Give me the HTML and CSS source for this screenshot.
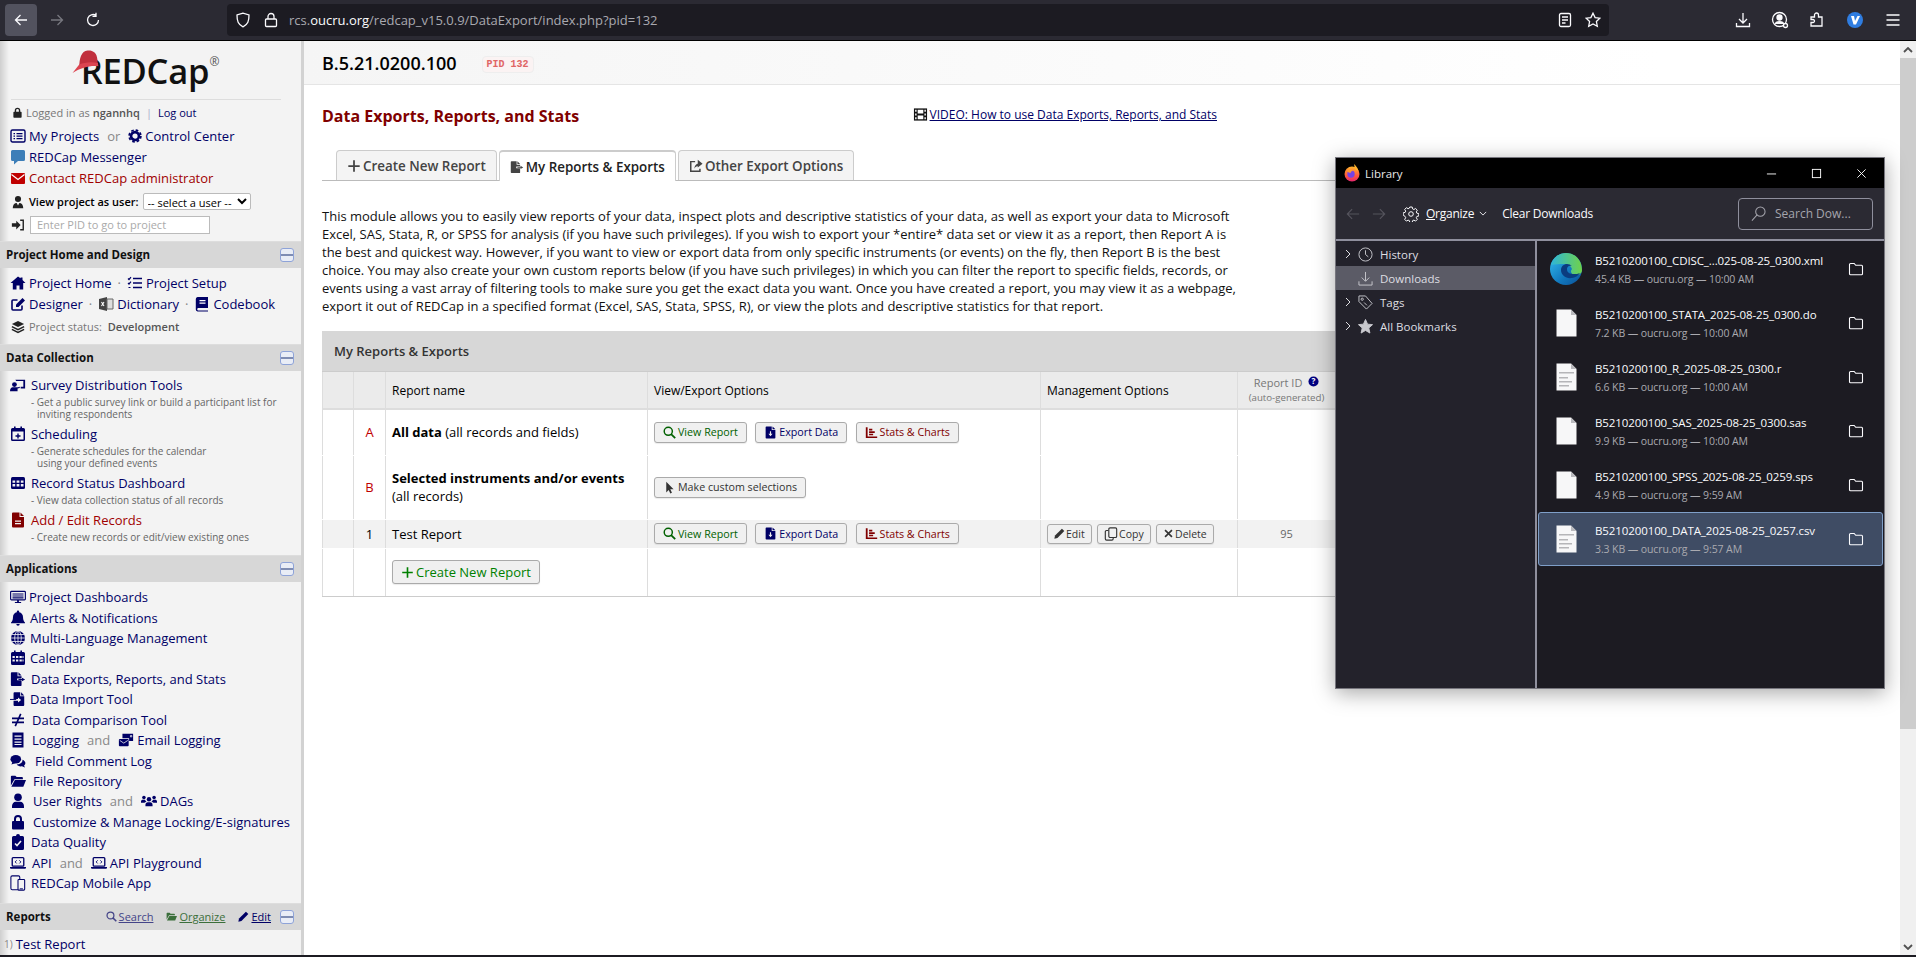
FILE: index.html
```html
<!DOCTYPE html>
<html lang="en">
<head>
    <meta charset="UTF-8">
    <title>REDCap - Data Exports, Reports, and Stats</title>
    <link rel="stylesheet" href="styles.css">
</head>
<body>
    <!-- shared icons -->
    <svg class="sprite" xmlns="http://www.w3.org/2000/svg">
        <defs>
            <linearGradient id="edge-a" x1="0" y1="0" x2="1" y2="1"><stop offset="0" stop-color="#35c1f1"/><stop offset=".6" stop-color="#1177bd"/><stop offset="1" stop-color="#0c4f95"/></linearGradient>
            <linearGradient id="edge-b" x1="0" y1="0" x2="1" y2="0"><stop offset="0" stop-color="#2fb6d8"/><stop offset="1" stop-color="#6fd24a"/></linearGradient>
            <linearGradient id="fox" x1="0" y1="0" x2="0" y2="1"><stop offset="0" stop-color="#ffb32c"/><stop offset=".6" stop-color="#ff5a3c"/><stop offset="1" stop-color="#e3246f"/></linearGradient>
        </defs>
        <symbol id="i-list" viewBox="0 0 16 16"><rect x="1" y="2" width="14" height="12" rx="1.5" fill="none" stroke="currentColor" stroke-width="1.4"/><path d="M3.5 5h1.5v1.2H3.500zM3.500 7.500h1.500v1.200H3.500zM3.500 10h1.500v1.200H3.500zM6.500 5h6v1.200h-6zM6.500 7.500h6v1.200h-6zM6.500 10h6v1.200h-6z" fill="currentColor"/></symbol>
        <symbol id="i-cog" viewBox="0 0 16 16"><circle cx="8" cy="8" r="4.500" fill="none" stroke="currentColor" stroke-width="3"/><circle cx="8" cy="8" r="6.700" fill="none" stroke="currentColor" stroke-width="2" stroke-dasharray="3 2.260"/></symbol>
        <symbol id="i-comment" viewBox="0 0 16 16"><path d="M2.500 1h11A1.500 1.500 0 0 1 15 2.500v8a1.500 1.500 0 0 1-1.500 1.500H8l-4 3.500V12H2.500A1.500 1.500 0 0 1 1 10.500v-8A1.500 1.500 0 0 1 2.500 1z" fill="currentColor"/></symbol>
        <symbol id="i-mail" viewBox="0 0 16 16"><rect x="1" y="3" width="14" height="11" rx="1" fill="currentColor"/><path d="M1.500 4.500 8 9.500l6.500-5" fill="none" stroke="#fff" stroke-width="1.200"/></symbol>
        <symbol id="i-tie" viewBox="0 0 16 16"><circle cx="8" cy="4.500" r="3.500" fill="currentColor"/><path d="M2 15c0-4 2-6 4.500-6L8 12l1.500-3C12 9 14 11 14 15z" fill="currentColor"/></symbol>
        <symbol id="i-signin" viewBox="0 0 16 16"><path d="M1 6h5V3l5 5-5 5v-3H1z" fill="currentColor"/><path d="M10.500 2.500H14v11h-3.500" fill="none" stroke="currentColor" stroke-width="1.600"/></symbol>
        <symbol id="i-home" viewBox="0 0 16 16"><path d="M8 1.500 .5 8h2.300v6.500h3.700v-4h3v4h3.700V8h2.300L12.500 5V2.500h-2v.8z" fill="currentColor"/></symbol>
        <symbol id="i-tasks" viewBox="0 0 16 16"><path d="m1 3.500 1 1 2-2.300M1 8l1 1 2-2.300M1.500 12.500h2" fill="none" stroke="currentColor" stroke-width="1.200"/><path d="M6 2.700h9v1.500H6zM6 7.300h9v1.500H6zM6 11.800h9v1.500H6z" fill="currentColor"/></symbol>
        <symbol id="i-edit" viewBox="0 0 16 16"><path d="M12 9.500V13a1 1 0 0 1-1 1H3a1 1 0 0 1-1-1V5a1 1 0 0 1 1-1h4.500" fill="none" stroke="currentColor" stroke-width="1.600"/><path d="M6 8.500 12.500 2 15 4.500 8.500 11H6z" fill="currentColor"/></symbol>
        <symbol id="i-dict" viewBox="0 0 16 16"><path d="M1 3 9 1v14l-8-2z" fill="#444"/><path d="M9 3h6v10H9z" fill="#ddd" stroke="#666"/><path d="m3.500 6 2.500 4M6 6l-2.500 4" stroke="#fff" stroke-width="1.100"/></symbol>
        <symbol id="i-book" viewBox="0 0 16 16"><path d="M3.500 1H14v11H4a1.300 1.300 0 0 0 0 2.400h10V15.500H3.500A2 2 0 0 1 1.800 13.500V3A2 2 0 0 1 3.500 1z" fill="currentColor"/><path d="M5.500 4h6v1.200h-6zM5.500 6.500h6v1.200h-6z" fill="#fff"/></symbol>
        <symbol id="i-layers" viewBox="0 0 16 16"><path d="m8 1 7 3.500L8 8 1 4.500z" fill="currentColor"/><path d="m1 7.500 7 3.500 7-3.500M1 10.800l7 3.500 7-3.500" fill="none" stroke="currentColor" stroke-width="1.700"/></symbol>
        <symbol id="i-teacher" viewBox="0 0 18 16"><path d="M6 2h11v10h-5v-2h3V3.500H7z" fill="currentColor"/><circle cx="5" cy="7.500" r="2.700" fill="currentColor"/><path d="M0 15c0-3 1.500-4.500 3-4.500h6l2-.500v1.500L8.500 12v3z" fill="currentColor"/></symbol>
        <symbol id="i-calplus" viewBox="0 0 16 16"><path d="M4 .5h1.600V2h4.800V.5H12V2h1.500A1.500 1.500 0 0 1 15 3.500v10a1.500 1.500 0 0 1-1.500 1.500h-11A1.500 1.500 0 0 1 1 13.500v-10A1.500 1.500 0 0 1 2.500 2H4z" fill="currentColor"/><rect x="2.500" y="5.500" width="11" height="8" fill="#f3f3f3"/><path d="M7.300 7.500h1.400v1.800h1.800v1.400H8.700v1.800H7.300v-1.800H5.500V9.300h1.800z" fill="currentColor"/></symbol>
        <symbol id="i-table" viewBox="0 0 16 16"><rect x="1" y="2" width="14" height="12" rx="1.500" fill="currentColor"/><path d="M2.500 5.500h2.700v2.200H2.500zM6.600 5.500h2.800v2.200H6.600zM10.800 5.500h2.700v2.200h-2.700zM2.500 9h2.700v2.500H2.500zM6.600 9h2.800v2.500H6.600zM10.800 9h2.700v2.500h-2.700z" fill="#f3f3f3"/></symbol>
        <symbol id="i-file" viewBox="0 0 16 16"><path d="M3 .5h6.500V5H14v9.500a1 1 0 0 1-1 1H3a1 1 0 0 1-1-1v-13a1 1 0 0 1 1-1zM10.500.5 14 4h-3.500z" fill="currentColor"/><path d="M5 8.500h6v1.200H5zM5 11h6v1.200H5z" fill="#f3f3f3"/></symbol>
        <symbol id="i-monitor" viewBox="0 0 18 16"><rect x=".7" y="1.700" width="16.600" height="9.600" rx="1" fill="none" stroke="currentColor" stroke-width="1.300"/><path d="M2.800 4h12.400v1.300H2.800zM2.800 6.200h12.400v1.300H2.800zM2.800 8.400h12.400v1.300H2.800z" fill="currentColor"/><path d="M8 11.500h2v2h2.500v1.300h-7v-1.300H8z" fill="currentColor"/></symbol>
        <symbol id="i-bell" viewBox="0 0 16 16"><path d="M8 .5a1.200 1.200 0 0 1 1.200 1.200v.6C11.500 2.800 13 4.700 13 7c0 3.200 1 4.500 2 5.500v.8H1v-.8c1-1 2-2.300 2-5.500 0-2.300 1.500-4.200 3.800-4.700v-.6A1.200 1.200 0 0 1 8 .5zM6.300 14h3.400a1.700 1.700 0 0 1-3.400 0z" fill="currentColor"/></symbol>
        <symbol id="i-globe" viewBox="0 0 16 16"><circle cx="8" cy="8" r="7" fill="currentColor"/><path d="M8 1v14M1 8h14M2 4.500h12M2 11.500h12" stroke="#f3f3f3" stroke-width=".8"/><ellipse cx="8" cy="8" rx="3.300" ry="7" fill="none" stroke="#f3f3f3" stroke-width=".8"/></symbol>
        <symbol id="i-cal" viewBox="0 0 16 16"><path d="M4 .5h1.600V2h4.800V.5H12V2h1.500A1.500 1.500 0 0 1 15 3.500v10a1.500 1.500 0 0 1-1.500 1.500h-11A1.500 1.500 0 0 1 1 13.500v-10A1.500 1.500 0 0 1 2.500 2H4z" fill="currentColor"/><path d="M2.500 6h2.300v2H2.500zM6 6h2.300v2H6zM9.500 6h2.300v2H9.500zM12.500 6h1v2h-1zM2.500 9.500h2.300v2H2.500zM6 9.500h2.300v2H6zM9.500 9.500h2.300v2H9.500zM12.500 9.500h1v2h-1z" fill="#f3f3f3"/></symbol>
        <symbol id="i-export" viewBox="0 0 18 16"><path d="M2 .5h6.500V5H13v2.500H8v2h5V15a.8.800 0 0 1-.8.800H2a1 1 0 0 1-1-1V1.500a1 1 0 0 1 1-1zM9.500.5 13 4H9.500z" fill="currentColor"/><path d="M13.500 6.500 17 8.500l-3.500 2V9H9.500V8h4z" fill="currentColor"/></symbol>
        <symbol id="i-import" viewBox="0 0 18 16"><path d="M5 .5h6.500V5H16v9.800a1 1 0 0 1-1 1H5a1 1 0 0 1-1-1V10h5v1.800L12.500 9 9 6.200V8H4V1.500a1 1 0 0 1 1-1zM12.500.5 16 4h-3.500z" fill="currentColor"/><path d="M0 8.500h7" stroke="currentColor" stroke-width="1.100"/></symbol>
        <symbol id="i-neq" viewBox="0 0 16 16"><path d="M2 5.500h12v1.700H2zM2 9.500h12v1.700H2zM10 1.500l1.500.8L6 14.500l-1.500-.8z" fill="currentColor"/></symbol>
        <symbol id="i-receipt" viewBox="0 0 16 16"><path d="M2.500 .5h11v15h-11z" fill="currentColor"/><path d="M4.500 3.500h7v1.300h-7zM4.500 6.500h7v1.300h-7zM4.500 9.500h7v1.300h-7zM4.500 12h7v1h-7z" fill="#f3f3f3"/></symbol>
        <symbol id="i-mailbulk" viewBox="0 0 18 16"><path d="M5 1h12v8h-4.500V6H5z" fill="currentColor"/><rect x="1" y="7" width="11" height="8" rx="1" fill="currentColor"/><path d="m2 8.500 4.500 3 4.500-3M14 3h1.500v1.500H14z" fill="none" stroke="#f3f3f3" stroke-width=".9"/></symbol>
        <symbol id="i-comments" viewBox="0 0 18 16"><ellipse cx="6.500" cy="6" rx="6" ry="4.700" fill="currentColor"/><path d="m3 9-1.500 3L6 10.500z" fill="currentColor"/><path d="M14 6.500c2 .7 3.300 2.200 3.300 3.800 0 1.200-.6 2.200-1.500 2.900l1 2-3.300-1.200c-2.500.4-5-.4-6-2 4-.1 7-2.500 6.500-5.500z" fill="currentColor"/></symbol>
        <symbol id="i-folderopen" viewBox="0 0 18 16"><path d="M1 3a1 1 0 0 1 1-1h4l1.500 1.500h6a1 1 0 0 1 1 1V6H5L1 13z" fill="currentColor"/><path d="M5.500 7H18l-3 7.500H1.500z" fill="currentColor"/></symbol>
        <symbol id="i-user" viewBox="0 0 16 16"><circle cx="8" cy="4.300" r="3.800" fill="currentColor"/><path d="M2 15v-1.800c0-2.500 1.700-4.400 3.800-4.400h4.400c2.100 0 3.800 1.900 3.800 4.400V15z" fill="currentColor"/></symbol>
        <symbol id="i-users" viewBox="0 0 18 16"><circle cx="9" cy="6" r="2.500" fill="currentColor"/><path d="M5 14v-1.500c0-2 1.200-3 2.500-3h3c1.300 0 2.500 1 2.500 3V14z" fill="currentColor"/><circle cx="3.300" cy="4" r="2" fill="currentColor"/><circle cx="14.700" cy="4" r="2" fill="currentColor"/><path d="M0 10V8.500C0 7.200 1 6.500 2 6.500h2.500C5 8 6 8.500 6.300 8.800 5 9.200 4.400 9.700 4 10zM18 10V8.500c0-1.300-1-2-2-2h-2.500C13 8 12 8.500 11.700 8.800c1.300.4 1.900.9 2.300 1.200z" fill="currentColor"/></symbol>
        <symbol id="i-lock" viewBox="0 0 16 16"><path d="M4 7V5a4 4 0 0 1 8 0v2h1a1 1 0 0 1 1 1v6.500a1 1 0 0 1-1 1H3a1 1 0 0 1-1-1V8a1 1 0 0 1 1-1zm2 0h4V5a2 2 0 0 0-4 0z" fill="currentColor"/></symbol>
        <symbol id="i-clip" viewBox="0 0 16 16"><path d="M6 2a2 2 0 0 1 4 0h2.500A1.500 1.500 0 0 1 14 3.500v11a1.500 1.500 0 0 1-1.500 1.500h-9A1.500 1.500 0 0 1 2 14.500v-11A1.500 1.500 0 0 1 3.500 2z" fill="currentColor"/><path d="m5 9.500 2 2 4-4.500" fill="none" stroke="#f3f3f3" stroke-width="1.600"/></symbol>
        <symbol id="i-laptop" viewBox="0 0 18 16"><rect x="2.500" y="2" width="13" height="9.500" rx="1" fill="none" stroke="currentColor" stroke-width="1.500"/><path d="M0 12.500h18v.8a1.200 1.200 0 0 1-1.200 1.200H1.200A1.200 1.200 0 0 1 0 13.300z" fill="currentColor"/><path d="M7.500 5 5.800 6.800l1.700 1.700M10.500 5l1.700 1.800-1.700 1.700" fill="none" stroke="currentColor" stroke-width="1"/></symbol>
        <symbol id="i-mobile" viewBox="0 0 18 18"><rect x="1" y="1" width="10" height="15.500" rx="1.500" fill="none" stroke="currentColor" stroke-width="1.200"/><rect x="9" y="5" width="7.500" height="12" rx="1" fill="#f3f3f3" stroke="currentColor" stroke-width="1.200"/><path d="M11 15.500h3.500" stroke="currentColor"/></symbol>
        <symbol id="i-search" viewBox="0 0 16 16"><circle cx="6.500" cy="6.500" r="5" fill="none" stroke="currentColor" stroke-width="1.800"/><path d="m10 10 5 5" stroke="currentColor" stroke-width="2.200"/></symbol>
        <symbol id="i-pencil" viewBox="0 0 16 16"><path d="M11.500 1 15 4.500 5 14.500l-4.500 1 1-4.500z" fill="currentColor"/></symbol>
        <symbol id="i-plus" viewBox="0 0 16 16"><path d="M7 1.500h2V7h5.500v2H9v5.500H7V9H1.500V7H7z" fill="currentColor"/></symbol>
        <symbol id="i-share" viewBox="0 0 16 16"><path d="M11 5V8l-.2.100c-2.500.3-4.300 1.500-4.800 3.400 0-3.500 2-6.200 5-6.500zM10 .8l5.500 4.500-5.500 4.500z" fill="currentColor"/><path d="M12.500 11v3H2V3h5" fill="none" stroke="currentColor" stroke-width="1.700"/></symbol>
        <symbol id="i-film" viewBox="0 0 16 16"><rect x="1" y="1.500" width="14" height="13" fill="currentColor"/><path d="M2.300 3h1.500v2H2.300zM2.300 7h1.500v2H2.300zM2.300 11h1.500v2H2.300zM12.200 3h1.500v2h-1.500zM12.200 7h1.500v2h-1.500zM12.200 11h1.500v2h-1.500zM5 3h6v4H5zM5 9h6v4H5z" fill="#fff"/></symbol>
        <symbol id="i-filesm" viewBox="0 0 16 16"><path d="M3 .5h6.500V5H14v9.500a1 1 0 0 1-1 1H3a1 1 0 0 1-1-1v-13a1 1 0 0 1 1-1zM10.500.5 14 4h-3.500z" fill="currentColor"/><path d="M7.300 6.500h1.400v3h1.800L8 12.500 5.500 9.500h1.800z" fill="#f0f0f0"/></symbol>
        <symbol id="i-chart" viewBox="0 0 16 16"><path d="M1 1.500h2.200v11.300H15v1.900H1z" fill="currentColor"/><path d="M5 3.500h4v2H5zM5 6.500h7v2H5zM5 9.500h5v2H5z" fill="currentColor"/></symbol>
        <symbol id="i-cursor" viewBox="0 0 16 16"><path d="M4 1v13l3-3 2 4.500 2-1L9 10h4z" fill="currentColor"/></symbol>
        <symbol id="i-copy" viewBox="0 0 16 16"><rect x="5.500" y="1" width="9" height="11" rx="1.500" fill="none" stroke="currentColor" stroke-width="1.300"/><path d="M5 4H3a1.500 1.500 0 0 0-1.500 1.500v8A1.500 1.500 0 0 0 3 15h6a1.500 1.500 0 0 0 1.500-1.500V12.500" fill="none" stroke="currentColor" stroke-width="1.300"/></symbol>
        <symbol id="i-times" viewBox="0 0 16 16"><path d="m3 3 10 10M13 3 3 13" stroke="currentColor" stroke-width="2.400"/></symbol>
        <symbol id="i-folder" viewBox="0 0 16 16"><path d="M1.500 3.500a1 1 0 0 1 1-1h3.700l1.500 1.800h5.800a1 1 0 0 1 1 1v7.400a1 1 0 0 1-1 1H2.500a1 1 0 0 1-1-1z" fill="none" stroke="currentColor" stroke-width="1.100"/></symbol>
        <symbol id="i-doc" viewBox="0 0 21 28"><path d="M.5.500h14.500l5.500 5.500v21.500H.5z" fill="#f7f7f8"/><path d="M15 .5v5.500h5.500z" fill="#b9b9bd"/></symbol>
        <symbol id="i-doclines" viewBox="0 0 21 28"><path d="M.5.500h14.500l5.500 5.500v21.500H.5z" fill="#f7f7f8"/><path d="M15 .5v5.500h5.500z" fill="#b9b9bd"/><path d="M3 9h15v1.500H3zM3 14h9v1.500H3zM3 18h13v1.500H3zM3 22h10v1.500H3z" fill="#b5b5b8"/></symbol>
    </svg>

    <div class="browser-bar">
        <span class="nav-btn is-active"><svg class="tb-ic" viewBox="0 0 16 16"><path d="M14 8H2.500M7.500 3l-5 5 5 5"/></svg></span>
        <span class="nav-btn is-dim"><svg class="tb-ic" viewBox="0 0 16 16"><path d="M2 8h11.500M8.500 3l5 5-5 5"/></svg></span>
        <span class="nav-btn"><svg class="tb-ic" viewBox="0 0 16 16"><path d="M13.500 8A5.500 5.500 0 1 1 11 3.400M11 .8v3.500h-3.500"/></svg></span>
        <div class="url-bar">
            <svg class="tb-ic" viewBox="0 0 16 16"><path d="M8 1.200 2 3c0 6 1 9.500 6 11.800C13 12.500 14 9 14 3z"/></svg>
            <svg class="tb-ic url-lock" viewBox="0 0 16 16"><rect x="2.500" y="7" width="11" height="7.500" rx="1"/><path d="M5 7V4.500a3 3 0 0 1 6 0V7"/></svg>
            <span class="url-text">rcs.<b>oucru.org</b>/redcap_v15.0.9/DataExport/index.php?pid=132</span>
            <svg class="tb-ic url-reader" viewBox="0 0 16 16"><rect x="2.500" y="1.500" width="11" height="13" rx="1.500"/><path d="M5 5h6M5 8h6M5 11h3.500"/></svg>
            <svg class="tb-ic url-star" viewBox="0 0 16 16"><path d="m8 1.200 2.100 4.400 4.700.6-3.400 3.300.9 4.700L8 11.900l-4.300 2.300.9-4.700L1.200 6.200l4.700-.6z"/></svg>
        </div>
        <svg class="tb-ic bar-download" viewBox="0 0 16 16"><path d="M8 1v9.500M4 7l4 4 4-4M1.500 11v3.500h13V11"/></svg>
        <svg class="tb-ic bar-account" viewBox="0 0 18 18"><circle cx="8.500" cy="8.500" r="7"/><circle cx="8.500" cy="6.500" r="2.500" fill="#fbfbfe"/><path d="M4.500 13c0-3 8-3 8 0" fill="#fbfbfe"/><circle cx="14.500" cy="14.500" r="2" fill="#2b2a33"/></svg>
        <svg class="tb-ic bar-ext" viewBox="0 0 16 16"><path d="M2 5h3.500V3a2 2 0 0 1 4 0v2H13v9H2v-3.500h2a1.500 1.500 0 0 0 0-3H2z"/></svg>
        <svg class="bar-vpn" viewBox="0 0 16 16"><path d="M8 0a8 8 0 0 1 8 8 8 8 0 0 1-16 0 8 8 0 0 1 8-8z" fill="#2f7de1"/><path d="M4 4h3l1 5 2.500-5H13l-4 8.500H6.500z" fill="#fff"/></svg>
        <svg class="tb-ic bar-menu" viewBox="0 0 16 16"><path d="M1.500 3h13M1.500 8h13M1.500 13h13"/></svg>
    </div>

    <div class="app">
        <nav class="sidebar">
            <div class="logo-box">
                <div class="logo">
                    <svg class="logo-hat" viewBox="0 0 28 23"><path d="M7 17C7 8 9 1 15 .5c5-.4 9 2 9.500 8.500l.5 5c-6-1-12-.5-18 3z" fill="#c1303d"/><path d="M7 14 .5 22c4-2.500 7-4 11-5 5-1.500 9-2 14-1.500l-.5-3C18 11 12 12 7 14z" fill="#dc4450"/></svg>
                    <span class="logo-text">REDCap</span><sup class="logo-reg">®</sup>
                </div>
            </div>
            <div class="user-row">
                <svg class="ic ic-sm"><use href="#i-lock"/></svg>
                <span>Logged in as <b>ngannhq</b></span><span class="sep">|</span><a class="side-link">Log out</a>
            </div>
            <div class="side-row top-row"><svg class="ic"><use href="#i-list"/></svg><a class="side-link">My Projects</a><span class="or">or</span><svg class="ic ic-cog"><use href="#i-cog"/></svg><a class="side-link">Control Center</a></div>
            <div class="side-row"><svg class="ic ic-blue"><use href="#i-comment"/></svg><a class="side-link">REDCap Messenger</a></div>
            <div class="side-row"><svg class="ic ic-red"><use href="#i-mail"/></svg><a class="side-link link-red">Contact REDCap administrator</a></div>
            <div class="view-row">
                <svg class="ic ic-sm2"><use href="#i-tie"/></svg>
                <b>View project as user:</b>
                <select class="user-select"><option>-- select a user --</option></select>
            </div>
            <div class="pid-row">
                <svg class="ic ic-sm2"><use href="#i-signin"/></svg>
                <input class="pid-input" placeholder="Enter PID to go to project">
            </div>

            <div class="section-head">Project Home and Design<span class="collapse"></span></div>
            <div class="section-body home-body">
                <div class="side-row"><svg class="ic"><use href="#i-home"/></svg><a class="side-link">Project Home</a><span class="dot">·</span><svg class="ic"><use href="#i-tasks"/></svg><a class="side-link">Project Setup</a></div>
                <div class="side-row"><svg class="ic"><use href="#i-edit"/></svg><a class="side-link">Designer</a><span class="dot">·</span><svg class="ic"><use href="#i-dict"/></svg><a class="side-link">Dictionary</a><span class="dot">·</span><svg class="ic"><use href="#i-book"/></svg><a class="side-link">Codebook</a></div>
                <div class="status-row"><svg class="ic ic-sm2"><use href="#i-layers"/></svg><span>Project status:</span><b>Development</b></div>
            </div>

            <div class="section-head">Data Collection<span class="collapse"></span></div>
            <div class="section-body collect-body">
                <div class="side-item">
                    <div class="side-row"><svg class="ic pad-2"><use href="#i-teacher"/></svg><a class="side-link">Survey Distribution Tools</a></div>
                    <p class="side-desc">- Get a public survey link or build a participant list for<br><span class="indent">inviting respondents</span></p>
                </div>
                <div class="side-item">
                    <div class="side-row"><svg class="ic pad-2"><use href="#i-calplus"/></svg><a class="side-link">Scheduling</a></div>
                    <p class="side-desc">- Generate schedules for the calendar<br><span class="indent">using your defined events</span></p>
                </div>
                <div class="side-item">
                    <div class="side-row"><svg class="ic pad-2"><use href="#i-table"/></svg><a class="side-link">Record Status Dashboard</a></div>
                    <p class="side-desc">- View data collection status of all records</p>
                </div>
                <div class="side-item">
                    <div class="side-row"><svg class="ic ic-maroon pad-2"><use href="#i-file"/></svg><a class="side-link link-red">Add / Edit Records</a></div>
                    <p class="side-desc">- Create new records or edit/view existing ones</p>
                </div>
            </div>

            <div class="section-head">Applications<span class="collapse"></span></div>
            <div class="section-body apps-body">
                <div class="side-row"><svg class="ic"><use href="#i-monitor"/></svg><a class="side-link">Project Dashboards</a></div>
                <div class="side-row"><svg class="ic pad-1"><use href="#i-bell"/></svg><a class="side-link">Alerts &amp; Notifications</a></div>
                <div class="side-row"><svg class="ic pad-1"><use href="#i-globe"/></svg><a class="side-link">Multi-Language Management</a></div>
                <div class="side-row"><svg class="ic pad-1"><use href="#i-cal"/></svg><a class="side-link">Calendar</a></div>
                <div class="side-row"><svg class="ic pad-2"><use href="#i-export"/></svg><a class="side-link">Data Exports, Reports, and Stats</a></div>
                <div class="side-row"><svg class="ic pad-1"><use href="#i-import"/></svg><a class="side-link">Data Import Tool</a></div>
                <div class="side-row"><svg class="ic pad-3"><use href="#i-neq"/></svg><a class="side-link">Data Comparison Tool</a></div>
                <div class="side-row"><svg class="ic pad-3"><use href="#i-receipt"/></svg><a class="side-link">Logging</a><span class="or">and</span><svg class="ic"><use href="#i-mailbulk"/></svg><a class="side-link">Email Logging</a></div>
                <div class="side-row"><svg class="ic pad-6"><use href="#i-comments"/></svg><a class="side-link">Field Comment Log</a></div>
                <div class="side-row"><svg class="ic pad-4"><use href="#i-folderopen"/></svg><a class="side-link">File Repository</a></div>
                <div class="side-row"><svg class="ic pad-4"><use href="#i-user"/></svg><a class="side-link">User Rights</a><span class="or">and</span><svg class="ic"><use href="#i-users"/></svg><a class="side-link">DAGs</a></div>
                <div class="side-row"><svg class="ic pad-4"><use href="#i-lock"/></svg><a class="side-link">Customize &amp; Manage Locking/E-signatures</a></div>
                <div class="side-row"><svg class="ic pad-2"><use href="#i-clip"/></svg><a class="side-link">Data Quality</a></div>
                <div class="side-row"><svg class="ic pad-3"><use href="#i-laptop"/></svg><a class="side-link">API</a><span class="or">and</span><svg class="ic"><use href="#i-laptop"/></svg><a class="side-link">API Playground</a></div>
                <div class="side-row"><svg class="ic pad-2"><use href="#i-mobile"/></svg><a class="side-link">REDCap Mobile App</a></div>
            </div>

            <div class="section-head">
                Reports
                <span class="head-tools">
                    <span class="tool tool-gray"><svg class="ic-tool"><use href="#i-search"/></svg><u>Search</u></span>
                    <span class="tool tool-green"><svg class="ic-tool"><use href="#i-folderopen"/></svg><u>Organize</u></span>
                    <span class="tool tool-blue"><svg class="ic-tool"><use href="#i-pencil"/></svg><u>Edit</u></span>
                </span>
                <span class="collapse"></span>
            </div>
            <div class="report-row"><span class="report-num">1)</span><a class="side-link">Test Report</a></div>
        </nav>

        <main class="main">
            <div class="project-bar">
                <span class="project-name">B.5.21.0200.100</span>
                <code class="pid-badge">PID 132</code>
            </div>
            <div class="content">
                <div class="title-row">
                    <h1 class="page-title">Data Exports, Reports, and Stats</h1>
                    <a class="video-link"><svg class="ic ic-film"><use href="#i-film"/></svg><u>VIDEO: How to use Data Exports, Reports, and Stats</u></a>
                </div>
                <div class="tabs">
                    <a class="tab"><svg class="ic-tab"><use href="#i-plus"/></svg>Create New Report</a>
                    <a class="tab tab-active"><svg class="ic-tab"><use href="#i-export"/></svg>My Reports &amp; Exports</a>
                    <a class="tab"><svg class="ic-tab"><use href="#i-share"/></svg>Other Export Options</a>
                </div>
                <p class="intro">This module allows you to easily view reports of your data, inspect plots and descriptive statistics of your data, as well as export your data to Microsoft Excel, SAS, Stata, R, or SPSS for analysis (if you have such privileges). If you wish to export your *entire* data set or view it as a report, then Report A is the best and quickest way. However, if you want to view or export data from only specific instruments (or events) on the fly, then Report B is the best choice. You may also create your own custom reports below (if you have such privileges) in which you can filter the report to specific fields, records, or events using a vast array of filtering tools to make sure you get the exact data you want. Once you have created a report, you may view it as a webpage, export it out of REDCap in a specified format (Excel, SAS, Stata, SPSS, R), or view the plots and descriptive statistics for that report.</p>

                <div class="reports">
                    <div class="reports-title">My Reports &amp; Exports</div>
                    <table class="reports-table">
                        <colgroup><col class="c-drag"><col class="c-id"><col class="c-name"><col class="c-view"><col class="c-manage"><col class="c-rid"></colgroup>
                        <thead>
                            <tr>
                                <th></th><th></th><th>Report name</th><th>View/Export Options</th><th>Management Options</th>
                                <th class="rid-head">Report ID <svg class="help-ic" viewBox="0 0 12 12"><circle cx="6" cy="6" r="5.500" fill="#000080"/><text x="6" y="9" text-anchor="middle" class="help-q">?</text></svg><br><span class="rid-sub">(auto-generated)</span></th>
                            </tr>
                        </thead>
                        <tbody>
                            <tr class="row-a">
                                <td></td><td class="letter">A</td>
                                <td class="name"><b>All data</b> (all records and fields)</td>
                                <td class="view">
                                    <span class="btn btn-green"><svg class="ic-btn"><use href="#i-search"/></svg>View Report</span>
                                    <span class="btn btn-navy"><svg class="ic-btn"><use href="#i-filesm"/></svg>Export Data</span>
                                    <span class="btn btn-maroon"><svg class="ic-btn"><use href="#i-chart"/></svg>Stats &amp; Charts</span>
                                </td>
                                <td></td><td></td>
                            </tr>
                            <tr class="row-b">
                                <td></td><td class="letter">B</td>
                                <td class="name"><b>Selected instruments and/or events</b><br>(all records)</td>
                                <td class="view"><span class="btn btn-dark"><svg class="ic-btn"><use href="#i-cursor"/></svg>Make custom selections</span></td>
                                <td></td><td></td>
                            </tr>
                            <tr class="row-test">
                                <td></td><td class="num">1</td>
                                <td class="name">Test Report</td>
                                <td class="view">
                                    <span class="btn btn-green"><svg class="ic-btn"><use href="#i-search"/></svg>View Report</span>
                                    <span class="btn btn-navy"><svg class="ic-btn"><use href="#i-filesm"/></svg>Export Data</span>
                                    <span class="btn btn-maroon"><svg class="ic-btn"><use href="#i-chart"/></svg>Stats &amp; Charts</span>
                                </td>
                                <td class="view">
                                    <span class="btn btn-dark btn-sm"><svg class="ic-btn"><use href="#i-pencil"/></svg>Edit</span>
                                    <span class="btn btn-dark btn-sm btn-copy"><svg class="ic-btn"><use href="#i-copy"/></svg>Copy</span>
                                    <span class="btn btn-dark btn-sm"><svg class="ic-btn"><use href="#i-times"/></svg>Delete</span>
                                </td>
                                <td class="rid">95</td>
                            </tr>
                            <tr class="row-new">
                                <td></td><td></td>
                                <td class="name"><span class="btn btn-create"><svg class="ic-btn"><use href="#i-plus"/></svg>Create New Report</span></td>
                                <td></td><td></td><td></td>
                            </tr>
                        </tbody>
                    </table>
                </div>
            </div>
        </main>

        <div class="scrollbar">
            <span class="sb-btn"><svg viewBox="0 0 10 6"><path d="M1 5l4-4 4 4" fill="none" stroke="#505050" stroke-width="1.800"/></svg></span>
            <div class="sb-thumb"></div>
            <div class="sb-track"></div>
            <span class="sb-btn"><svg viewBox="0 0 10 6"><path d="M1 1l4 4 4-4" fill="none" stroke="#505050" stroke-width="1.800"/></svg></span>
        </div>
    </div>
    <div class="page-end"></div>

    <!-- floating Library window -->
    <section class="library">
        <header class="lib-title">
            <svg class="lib-logo" viewBox="0 0 16 18"><circle cx="8" cy="10" r="7.500" fill="url(#fox)"/><path d="M10 0c2 2 4 4 4.500 7L11 5z" fill="#ffb32c"/><circle cx="7" cy="10" r="3.700" fill="#7542e5"/><path d="M3 6c2-1 5-1 6 1-2 0-3 1-2 2-2 0-4-1-4-3z" fill="#ff9a2c"/></svg>
            <span class="lib-name">Library</span>
            <span class="win-btns">
                <svg viewBox="0 0 12 12"><path d="M1 6.500h10"/></svg>
                <svg viewBox="0 0 12 12"><rect x="1.500" y="1.500" width="9" height="9"/></svg>
                <svg viewBox="0 0 12 12"><path d="m1.500 1.500 9 9M10.500 1.500l-9 9"/></svg>
            </span>
        </header>
        <div class="lib-toolbar">
            <svg class="lib-arrow" viewBox="0 0 16 16"><path d="M15 8H1.500M7 2.500 1.500 8 7 13.500"/></svg>
            <svg class="lib-arrow" viewBox="0 0 16 16"><path d="M1 8h13.500M9 2.500 14.500 8 9 13.500"/></svg>
            <svg class="lib-gear" viewBox="0 0 16 16"><path d="M6.800 1h2.400l.4 1.900 1.300.6 1.700-1 1.700 1.700-1 1.700.6 1.300 1.900.4v2.400l-1.900.4-.6 1.300 1 1.700-1.700 1.700-1.700-1-1.300.6-.4 1.900H6.800l-.4-1.900-1.300-.6-1.700 1-1.700-1.700 1-1.700-.6-1.300L.2 9.200V6.800l1.900-.4.600-1.300-1-1.700 1.700-1.700 1.700 1 1.300-.6z"/><circle cx="8" cy="8" r="2.300"/></svg>
            <span class="lib-action"><u>O</u>rganize</span>
            <svg class="lib-chev" viewBox="0 0 10 6"><path d="m1 1 4 4 4-4"/></svg>
            <span class="lib-action lib-clear">Clear Downloads</span>
            <div class="lib-search">
                <svg viewBox="0 0 16 16"><circle cx="10" cy="6" r="5"/><path d="m6.500 9.500-5.500 6"/></svg>
                <span>Search Dow...</span>
            </div>
        </div>
        <div class="lib-body">
            <ul class="lib-tree">
                <li><svg class="tree-chev" viewBox="0 0 6 10"><path d="m1 1 4 4-4 4"/></svg><svg class="tree-ic" viewBox="0 0 16 16"><circle cx="8" cy="8" r="7"/><path d="M8 3.500V8l3 2.500"/></svg>History</li>
                <li class="is-selected"><span class="tree-gap"></span><svg class="tree-ic" viewBox="0 0 16 16"><path d="M8 1v9.500M4 7l4 4 4-4M1 11v4h14v-4"/></svg>Downloads</li>
                <li><svg class="tree-chev" viewBox="0 0 6 10"><path d="m1 1 4 4-4 4"/></svg><svg class="tree-ic" viewBox="0 0 16 16"><path d="M1 1h7l7 8-6 6-8-8z"/><circle cx="4.500" cy="4.500" r="1.200"/><path d="m6.500 8 3 3"/></svg>Tags</li>
                <li><svg class="tree-chev" viewBox="0 0 6 10"><path d="m1 1 4 4-4 4"/></svg><svg class="tree-ic tree-star" viewBox="0 0 16 16"><path d="m8 .5 2.200 5 5.300.5-4 3.600 1.200 5.400L8 12.200 3.300 15l1.200-5.400-4-3.600 5.300-.5z"/></svg>All Bookmarks</li>
            </ul>
            <ul class="lib-files">
                <li class="file">
                    <svg class="edge-ic" viewBox="0 0 32 32"><circle cx="16" cy="16" r="16" fill="url(#edge-a)"/><path d="M1 12C3 4 10 0 16 0c9 0 16 7 16 17 0 4-4 6-8 5-3-1-4-4-2-6-1-3-4-5-8-5-5 0-9 0-13 1z" fill="url(#edge-b)"/><path d="M24 21c-4 0-7-1-7-5 0-3 3-4 5-3-4-4-11-2-11 4 0 5 5 9 11 8 3-.5 6-2 8-5-2 1-4 1-6 1z" fill="#0b3c7f"/></svg>
                    <div class="file-text"><div class="file-name">B5210200100_CDISC_...025-08-25_0300.xml</div><div class="file-meta">45.4 KB — oucru.org — 10:00 AM</div></div>
                    <svg class="folder-ic"><use href="#i-folder"/></svg>
                </li>
                <li class="file">
                    <svg class="doc-ic"><use href="#i-doc"/></svg>
                    <div class="file-text"><div class="file-name">B5210200100_STATA_2025-08-25_0300.do</div><div class="file-meta">7.2 KB — oucru.org — 10:00 AM</div></div>
                    <svg class="folder-ic"><use href="#i-folder"/></svg>
                </li>
                <li class="file">
                    <svg class="doc-ic"><use href="#i-doclines"/></svg>
                    <div class="file-text"><div class="file-name">B5210200100_R_2025-08-25_0300.r</div><div class="file-meta">6.6 KB — oucru.org — 10:00 AM</div></div>
                    <svg class="folder-ic"><use href="#i-folder"/></svg>
                </li>
                <li class="file">
                    <svg class="doc-ic"><use href="#i-doc"/></svg>
                    <div class="file-text"><div class="file-name">B5210200100_SAS_2025-08-25_0300.sas</div><div class="file-meta">9.9 KB — oucru.org — 10:00 AM</div></div>
                    <svg class="folder-ic"><use href="#i-folder"/></svg>
                </li>
                <li class="file">
                    <svg class="doc-ic"><use href="#i-doc"/></svg>
                    <div class="file-text"><div class="file-name">B5210200100_SPSS_2025-08-25_0259.sps</div><div class="file-meta">4.9 KB — oucru.org — 9:59 AM</div></div>
                    <svg class="folder-ic"><use href="#i-folder"/></svg>
                </li>
                <li class="file is-selected">
                    <svg class="doc-ic"><use href="#i-doclines"/></svg>
                    <div class="file-text"><div class="file-name">B5210200100_DATA_2025-08-25_0257.csv</div><div class="file-meta">3.3 KB — oucru.org — 9:57 AM</div></div>
                    <svg class="folder-ic"><use href="#i-folder"/></svg>
                </li>
            </ul>
        </div>
    </section>
</body>
</html>
```

FILE: styles.css
```css
* {
    box-sizing: border-box;
}
html, body {
    margin: 0;
    height: 957px;
    overflow: hidden;
}
body {
    position: relative;
    display: flex;
    flex-direction: column;
    font-family: "Open Sans", "Liberation Sans", sans-serif;
    font-size: 13px;
    color: #000;
    background: #fff;
}
.sprite {
    position: absolute;
    width: 0;
    height: 0;
}
ul {
    margin: 0;
    padding: 0;
    list-style: none;
}

/* browser chrome */
.browser-bar {
    display: flex;
    align-items: center;
    flex: none;
    height: 41px;
    padding: 0 0 1px 5px;
    background: #2b2a33;
    border-bottom: 1px solid #000;
    position: relative;
}
.tb-ic {
    width: 16px;
    height: 16px;
    fill: none;
    stroke: #fbfbfe;
    stroke-width: 1.3;
    flex: none;
}
.nav-btn {
    display: flex;
    align-items: center;
    justify-content: center;
    width: 32px;
    height: 32px;
    margin-right: 4px;
    border-radius: 4px;
}
.nav-btn.is-active {
    background: #52525e;
}
.nav-btn.is-dim .tb-ic {
    stroke: #77777f;
}
.url-bar {
    display: flex;
    align-items: center;
    width: 1382px;
    height: 32px;
    margin-left: 114px;
    padding-left: 8px;
    background: #1c1b22;
    border-radius: 4px;
}
.url-lock {
    margin-left: 12px;
}
.url-text {
    margin-left: 10px;
    font-size: 13px;
    color: #a9a9b0;
}
.url-text b {
    font-weight: 400;
    color: #fbfbfe;
}
.url-reader {
    margin-left: auto;
}
.url-star {
    margin-left: 12px;
    margin-right: 8px;
}
.bar-download {
    margin-left: 126px;
}
.bar-account {
    width: 18px;
    height: 18px;
    margin-left: 20px;
}
.bar-ext {
    margin-left: 20px;
}
.bar-vpn {
    width: 16px;
    height: 16px;
    margin-left: 22px;
}
.bar-menu {
    margin-left: 22px;
}

.app {
    display: flex;
    flex: 1;
    min-height: 0;
}
.page-end {
    flex: none;
    height: 2px;
    background: #1c1b22;
}

/* sidebar */
.sidebar {
    flex: none;
    width: 304px;
    background: linear-gradient(to right, #cfcfcf 0, #f3f3f3 9px) #f3f3f3;
    border-right: 3px solid #d2d2d2;
    overflow: hidden;
}
.logo-box {
    height: 59px;
    margin: 0 20px 0 11px;
    padding-top: 9px;
    border-bottom: 1px solid #ddd;
}
.logo {
    position: relative;
    display: flex;
    justify-content: center;
    align-items: flex-start;
    height: 42px;
    padding-left: 8px;
    line-height: 42px;
}
.logo-hat {
    position: absolute;
    left: 61px;
    top: 0;
    width: 29px;
    height: 24px;
}
.logo-text {
    font-size: 34.500px;
    font-weight: 600;
    letter-spacing: -0.2px;
    color: #111;
    line-height: 42px;
}
.logo-reg {
    font-size: 12px;
    line-height: 24px;
    color: #555;
}
.ic {
    width: 16px;
    height: 16px;
    margin-right: 3px;
    flex: none;
    color: #000066;
}
.pad-1 { margin-right: 4px; }
.pad-2 { margin-right: 5px; }
.pad-3 { margin-right: 6px; }
.pad-4 { margin-right: 7px; }
.pad-6 { margin-right: 9px; }
.ic-sm {
    width: 11px;
    height: 11px;
    color: #222;
    margin-right: 3px;
}
.ic-sm2 {
    width: 14px;
    height: 14px;
    color: #222;
    margin-right: 4px;
}
.ic-cog {
    width: 14px;
    height: 14px;
    margin-right: 3px;
}
.ic-blue {
    color: #3d7eb8;
}
.ic-red {
    color: #c00000;
}
.ic-maroon {
    color: #800000;
}
.user-row {
    display: flex;
    align-items: center;
    height: 25px;
    padding-left: 12px;
    font-size: 11px;
    color: #777;
}
.user-row b {
    color: #555;
    font-weight: 600;
}
.sep {
    margin: 0 6px;
    color: #aac;
}
.user-row .side-link {
    font-size: 11px;
}
.side-row {
    display: flex;
    align-items: center;
    height: 20.450px;
    padding-left: 10px;
    white-space: nowrap;
}
.top-row {
    height: 22px;
}
.side-link {
    color: #000066;
}
.link-red {
    color: #a00000;
}
.or {
    margin: 0 8px;
    color: #888;
}
.dot {
    margin: 0 6px;
    color: #888;
}
.view-row {
    display: flex;
    align-items: center;
    height: 24px;
    margin-top: 2px;
    padding-left: 11px;
    font-size: 11px;
    white-space: nowrap;
}
.view-row b {
    font-weight: 600;
}
.user-select {
    width: 108px;
    height: 17px;
    margin-left: 4px;
    padding: 0;
    font-family: inherit;
    font-size: 11px;
    background: #fff;
    border: 1px solid #bbb;
    border-radius: 2px;
}
.pid-row {
    display: flex;
    align-items: center;
    height: 22px;
    margin-bottom: 5px;
    padding-left: 11px;
}
.pid-input {
    width: 180px;
    height: 18px;
    margin-left: 1px;
    padding: 0 6px;
    font-family: inherit;
    font-size: 11px;
    background: #fff;
    border: 1px solid #bbb;
}
.pid-input::placeholder {
    color: #aaa;
}
.section-head {
    display: flex;
    align-items: center;
    height: 27px;
    padding: 0 7px 0 6px;
    background: #d7d7d7;
    border-top: 1px solid #ddd;
    font-size: 11.500px;
    font-weight: 700;
    color: #111;
}
.collapse {
    width: 14px;
    height: 14px;
    margin-left: auto;
    border: 1px solid #8ea3d8;
    border-radius: 3px;
    background: linear-gradient(to bottom, transparent 5px, #7f8db3 5px, #7f8db3 7px, transparent 7px) #e9edf6;
}
.home-body {
    height: 76px;
    padding-top: 5px;
}
.status-row {
    display: flex;
    align-items: center;
    height: 22px;
    margin-top: 2px;
    padding-left: 11px;
    font-size: 11px;
    color: #777;
}
.status-row b {
    margin-left: 6px;
    font-weight: 600;
    color: #555;
}
.collect-body {
    height: 184px;
    padding-top: 4px;
}
.side-item {
    margin-bottom: 3px;
}
.side-desc {
    margin: 2px 0 0 31px;
    font-size: 10px;
    line-height: 11.700px;
    color: #666;
}
.indent {
    margin-left: 6px;
}
.apps-body {
    height: 321px;
    padding-top: 5px;
}
.head-tools {
    display: flex;
    margin-left: auto;
    font-size: 11px;
    font-weight: 400;
}
.tool {
    display: flex;
    align-items: center;
    margin-right: 13px;
}
.tool:last-child {
    margin-right: 9px;
}
.tool-gray {
    color: #444488;
}
.tool-green {
    color: #3b6f3b;
}
.tool-blue {
    color: #000066;
}
.ic-tool {
    width: 11px;
    height: 11px;
    margin-right: 2px;
}
.head-tools + .collapse {
    margin-left: 0;
}
.report-row {
    display: flex;
    align-items: center;
    height: 29px;
    padding-left: 4px;
}
.report-num {
    margin-right: 3px;
    font-size: 10px;
    color: #888;
}

/* main column */
.main {
    flex: 1;
    min-width: 0;
    overflow: hidden;
}
.project-bar {
    display: flex;
    align-items: center;
    height: 44px;
    padding: 1px 0 0 18px;
    background: linear-gradient(to right, #f5f5f5, #fff 85%);
    border-bottom: 1px solid #e5e5e5;
}
.project-name {
    font-size: 18px;
    font-weight: 600;
}
.pid-badge {
    margin: 2px 0 0 25px;
    padding: 2px 4px;
    font-family: "Liberation Mono", monospace;
    font-size: 10px;
    font-weight: 700;
    color: #e06565;
    background: #fbf3f3;
    border: 1px solid #eee;
    border-radius: 4px;
}
.content {
    padding-left: 18px;
}
.title-row {
    display: flex;
    justify-content: space-between;
    align-items: center;
    width: 895px;
    height: 62px;
}
.page-title {
    margin: 0;
    font-size: 16px;
    font-weight: 700;
    color: #800000;
}
.video-link {
    display: flex;
    align-items: center;
    margin-bottom: 3px;
    font-size: 12px;
    color: #000066;
}
.ic-film {
    width: 15px;
    height: 15px;
    margin-right: 2px;
    color: #111;
}
.tabs {
    display: flex;
    width: 1100px;
    height: 31px;
    margin-top: 3px;
    padding: 0 0 0 14px;
    gap: 2px;
    border-bottom: 1px solid #bbb;
}
.tab {
    display: flex;
    align-items: center;
    height: 30px;
    padding: 0 10px;
    font-size: 13.400px;
    font-weight: 600;
    color: #444;
    background: #f4f4f4;
    border: 1px solid #ccc;
    border-bottom: none;
    border-radius: 4px 4px 0 0;
}
.tab-active {
    height: 31px;
    color: #222;
    background: #fff;
    border-width: 2px 1px 0;
}
.ic-tab {
    width: 14px;
    height: 14px;
    margin-right: 2px;
    color: #444;
}
.intro {
    width: 925px;
    margin: 26px 0 16px;
    font-size: 13px;
    line-height: 18px;
    color: #111;
}
.reports {
    width: 1014px;
}
.reports-title {
    display: flex;
    align-items: center;
    height: 41px;
    padding-left: 12px;
    font-size: 13px;
    font-weight: 600;
    color: #333;
    background: #d7d7d7;
    border-bottom: 1px solid #ccc;
}
.reports-table {
    width: 100%;
    table-layout: fixed;
    border-collapse: collapse;
    border-left: 1px solid #ddd;
}
.c-drag { width: 31px; }
.c-id { width: 32px; }
.c-name { width: 262px; }
.c-view { width: 393px; }
.c-manage { width: 197px; }
.reports-table th {
    height: 37px;
    padding: 0 6px;
    text-align: left;
    font-size: 12px;
    font-weight: 400;
    background: #ebebeb;
    border-right: 1px solid #ddd;
    border-bottom: 2px solid #ddd;
}
.reports-table td {
    padding: 0 6px;
    font-size: 13px;
    border-right: 1px solid #ddd;
    border-bottom: 1px solid #fff;
}
.reports-table .rid-head {
    padding: 0;
    text-align: center;
    font-size: 11px;
    line-height: 14px;
    color: #777;
}
.rid-sub {
    font-size: 9.700px;
}
.help-ic {
    width: 11px;
    height: 11px;
    margin-left: 3px;
}
.help-q {
    font-size: 9px;
    font-weight: 700;
    fill: #fff;
}
.row-a td { height: 46px; }
.row-b td { height: 64px; }
.row-test td {
    height: 29px;
    background: #f2f2f2;
}
.reports-table .row-new td {
    height: 48px;
    border-bottom: 1px solid #ccc;
}
.reports-table .letter {
    text-align: center;
    font-size: 13px;
    color: #c00000;
}
.reports-table .num {
    text-align: center;
    font-size: 13px;
}
.reports-table .name {
    line-height: 18px;
}
.name b {
    font-weight: 700;
}
.reports-table .rid {
    text-align: center;
    font-size: 11px;
    color: #666;
}
.view {
    white-space: nowrap;
}
.btn {
    display: inline-flex;
    align-items: center;
    height: 21px;
    margin-right: 5px;
    padding: 0 8px;
    font-size: 10.700px;
    background: #f0f0f0;
    border: 1px solid #aaa;
    border-radius: 3px;
    box-shadow: 0 1px 1px rgba(0, 0, 0, 0.08);
    vertical-align: middle;
}
.ic-btn {
    width: 13px;
    height: 13px;
    margin-right: 2px;
}
.btn-green { color: #006000; }
.btn-navy { color: #000066; }
.btn-maroon { color: #800000; }
.btn-dark { color: #333; }
.btn-sm {
    height: 20px;
    margin-right: 2px;
    padding: 0 6px;
    font-size: 10.500px;
}
.btn-sm .ic-btn {
    width: 11px;
    height: 11px;
    margin-right: 1px;
}
.btn-sm.btn-copy .ic-btn {
    width: 14px;
    height: 14px;
}
.btn-create {
    height: 24px;
    padding: 0 8px;
    font-size: 13px;
    color: #008000;
}

/* scrollbar */
.scrollbar {
    display: flex;
    flex-direction: column;
    flex: none;
    width: 16px;
    background: #f0f0f0;
}
.sb-btn {
    display: flex;
    align-items: center;
    justify-content: center;
    flex: none;
    height: 17px;
}
.sb-btn svg {
    width: 10px;
    height: 6px;
}
.sb-thumb {
    flex: none;
    height: 671px;
    background: #cdcdcd;
}
.sb-track {
    flex: 1;
}

/* Library window */
.library {
    position: absolute;
    left: 1335px;
    top: 157px;
    display: flex;
    flex-direction: column;
    width: 550px;
    height: 532px;
    color: #fbfbfe;
    font-size: 12px;
    background: #2b2a33;
    border: 1px solid #77767e;
    box-shadow: 0 4px 20px rgba(0, 0, 0, 0.35);
}
.lib-title {
    display: flex;
    align-items: center;
    flex: none;
    height: 30px;
    padding-left: 8px;
    background: #000;
}
.lib-logo {
    width: 16px;
    height: 18px;
}
.lib-name {
    margin-left: 5px;
    color: #e8e8e8;
    font-size: 11.500px;
}
.win-btns {
    display: flex;
    margin-left: auto;
    padding-right: 17px;
    gap: 34px;
}
.win-btns svg {
    width: 11px;
    height: 11px;
    fill: none;
    stroke: #fff;
    stroke-width: 1;
}
.lib-toolbar {
    display: flex;
    align-items: center;
    flex: none;
    height: 53px;
    padding-left: 10px;
    border-bottom: 2px solid #8f8f9d;
}
.lib-arrow {
    width: 14px;
    height: 14px;
    margin-right: 12px;
    fill: none;
    stroke: #55545d;
    stroke-width: 1.300;
}
.lib-gear {
    width: 16px;
    height: 16px;
    margin: 0 7px 0 5px;
    fill: none;
    stroke: #fbfbfe;
    stroke-width: 1;
}
.lib-action {
    font-size: 12px;
    letter-spacing: -0.25px;
}
.lib-chev {
    width: 8px;
    height: 5px;
    margin-left: 5px;
    fill: none;
    stroke: #fbfbfe;
    stroke-width: 1.100;
}
.lib-clear {
    margin-left: 15px;
}
.lib-search {
    display: flex;
    align-items: center;
    width: 135px;
    height: 32px;
    margin-left: auto;
    margin-right: 11px;
    padding-left: 12px;
    color: #a5a5ad;
    border: 1px solid #8f8f9d;
    border-radius: 4px;
}
.lib-search svg {
    width: 15px;
    height: 15px;
    margin-right: 9px;
    fill: none;
    stroke: #a5a5ad;
    stroke-width: 1.100;
}
.lib-body {
    display: flex;
    flex: 1;
    min-height: 0;
}
.lib-tree {
    flex: none;
    width: 199px;
    padding-top: 1px;
    background: #23222b;
    font-size: 11.500px;
    color: #dedee2;
}
.lib-tree li {
    display: flex;
    align-items: center;
    height: 24px;
    padding-left: 9px;
}
.lib-tree li.is-selected {
    background: #5b5b66;
}
.tree-chev {
    width: 6px;
    height: 10px;
    margin-right: 7px;
    fill: none;
    stroke: #dedee2;
    stroke-width: 1;
}
.tree-gap {
    width: 13px;
}
.tree-ic {
    width: 15px;
    height: 15px;
    margin-right: 7px;
    fill: none;
    stroke: #c9c9ce;
    stroke-width: 1;
}
.tree-star {
    fill: #c9c9ce;
}
.lib-files {
    flex: 1;
    padding: 1px 1px 0;
    background: #1c1b22;
    border-left: 2px solid #8f8f9d;
}
.file {
    display: flex;
    align-items: center;
    height: 54px;
    padding-left: 17px;
    position: relative;
    border: 1px solid transparent;
}
.file.is-selected {
    background: #3f4c64;
    border-color: #7f9fc8;
    border-radius: 3px;
}
.edge-ic {
    width: 32px;
    height: 32px;
    margin-left: -6px;
    margin-right: 13px;
    flex: none;
}
.doc-ic {
    width: 21px;
    height: 28px;
    margin-right: 18px;
    flex: none;
}
.file-text {
    flex: 1;
    min-width: 0;
    padding-top: 2px;
}
.file-name {
    font-size: 11.500px;
    letter-spacing: -0.100px;
    white-space: nowrap;
    line-height: 19px;
}
.file-meta {
    font-size: 10.500px;
    letter-spacing: -0.100px;
    color: #aaaab0;
    white-space: nowrap;
    line-height: 19px;
}
.folder-ic {
    width: 16px;
    height: 16px;
    margin-right: 18px;
    color: #fbfbfe;
    flex: none;
}
```
